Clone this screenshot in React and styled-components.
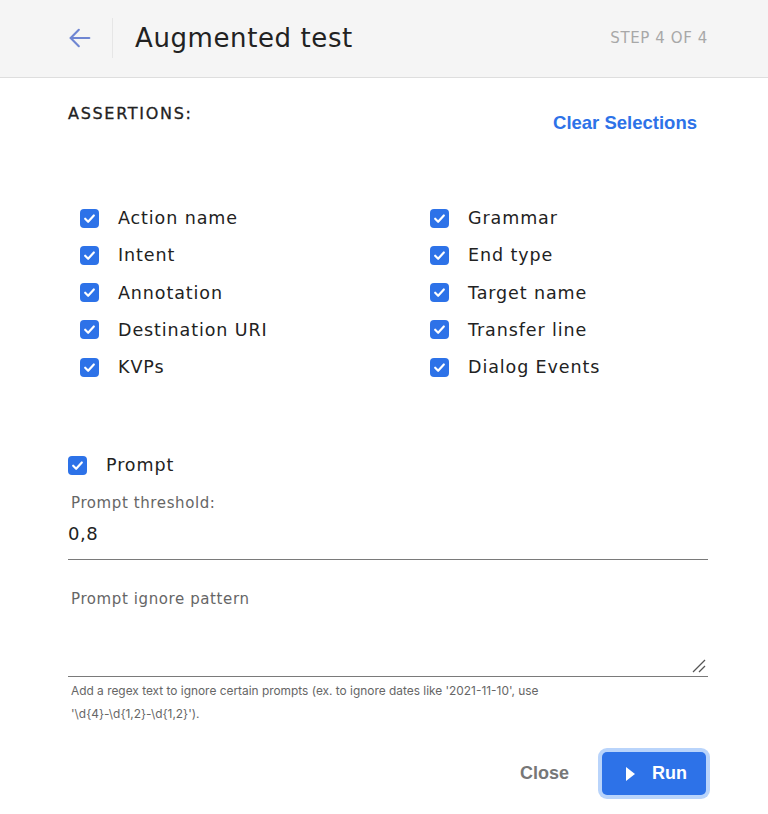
import styled, { createGlobalStyle } from "styled-components";

const GlobalStyle = createGlobalStyle`
  html, body {
    margin: 0;
    padding: 0;
    background: #fff;
  }
  body {
    font-family: "DejaVu Sans", "Noto Sans", sans-serif;
    color: #222;
  }
`;

const Container = styled.div`
  width: 768px;
  height: 814px;
  display: flex;
  flex-direction: column;
  overflow: hidden;
`;

const Header = styled.div`
  height: 78px;
  background: #f5f5f5;
  border-bottom: 1px solid #dedede;
  display: flex;
  align-items: center;
  padding: 0 60px 2px 66px;
  box-sizing: border-box;
`;

const BackButton = styled.div`
  width: 30px;
  height: 40px;
  display: flex;
  align-items: center;
  padding-right: 16px;
  border-right: 1px solid #e6e6e6;
  margin-right: 22px;
`;

const Title = styled.h1`
  margin: 0;
  font-size: 26px;
  font-weight: 400;
  letter-spacing: 0.6px;
  color: #222;
  flex: 1;
`;

const Step = styled.span`
  font-size: 15px;
  letter-spacing: 0.6px;
  color: #a8a8a8;
`;

const Body = styled.div`
  padding: 0 60px 0 68px;
  display: flex;
  flex-direction: column;
`;

const Top = styled.div`
  display: flex;
  justify-content: space-between;
  align-items: flex-start;
  padding-top: 26px;
`;

const SectionTitle = styled.div`
  font-size: 16px;
  line-height: 19px;
  letter-spacing: 1.7px;
  -webkit-text-stroke: 0.3px #222;
  color: #222;
`;

const ClearLink = styled.span`
  font-family: "Liberation Sans", Arial, sans-serif;
  font-weight: 700;
  font-size: 18.5px;
  line-height: 21px;
  color: #2d72e8;
  margin-top: 8px;
  margin-right: 11px;
`;

const Grid = styled.div`
  display: grid;
  grid-template-columns: 350px 1fr;
  row-gap: 15.25px;
  padding: 74px 0 0 12px;
`;

const Row = styled.label`
  display: flex;
  align-items: center;
  gap: 19px;
  font-size: 17.5px;
  letter-spacing: 0.9px;
  color: #222;
  height: 22px;
`;

const Box = styled.span`
  width: 19px;
  height: 19px;
  border-radius: 4px;
  background: #2d72e8;
  display: flex;
  align-items: center;
  justify-content: center;
  flex-shrink: 0;
`;

const PromptRow = styled(Row)`
  margin-top: 76px;
`;

const FieldLabel = styled.div`
  font-size: 15px;
  line-height: 17px;
  letter-spacing: 0.6px;
  color: #666;
  padding-left: 3px;
  margin-top: ${(p) => p.top || 0}px;
`;

const InputLine = styled.div`
  font-size: 18px;
  line-height: 20px;
  letter-spacing: 0.5px;
  color: #222;
  padding: 12px 0 15px;
  border-bottom: 1px solid #7a7a7a;
`;

const TextArea = styled.div`
  height: 68px;
  border-bottom: 1px solid #7a7a7a;
  position: relative;
`;

const Grip = styled.svg`
  position: absolute;
  right: 2px;
  bottom: 3px;
`;

const Help = styled.div`
  font-family: "Inter", "Noto Sans", sans-serif;
  font-size: 11.9px;
  line-height: 23px;
  color: #666;
  padding: 2px 0 0 3px;
`;

const Actions = styled.div`
  display: flex;
  justify-content: flex-end;
  align-items: center;
  gap: 33px;
  margin-top: 27px;
`;

const CloseButton = styled.span`
  font-family: "Liberation Sans", Arial, sans-serif;
  font-weight: 700;
  font-size: 18px;
  color: #777;
`;

const RunButton = styled.button`
  width: 104px;
  height: 43px;
  border: none;
  border-radius: 5px;
  background: #2d72e8;
  color: #fff;
  box-shadow: 0 0 0 4px #b9d4fb;
  display: flex;
  align-items: center;
  gap: 17px;
  padding: 0 0 0 24px;
  font-family: "Liberation Sans", Arial, sans-serif;
  font-weight: 700;
  font-size: 18px;
  margin-right: 2px;
`;

const Check = () => (
  <Box>
    <svg width="13" height="13" viewBox="0 0 24 24" fill="none" stroke="#fff" strokeWidth="4" strokeLinecap="round" strokeLinejoin="round">
      <polyline points="4 12.5 9.5 18 20 6.5" />
    </svg>
  </Box>
);

const items = [
  ["Action name", "Grammar"],
  ["Intent", "End type"],
  ["Annotation", "Target name"],
  ["Destination URI", "Transfer line"],
  ["KVPs", "Dialog Events"],
];

const App = () => {
  return (
    <Container>
      <GlobalStyle />
      <Header>
        <BackButton>
          <svg width="28" height="28" viewBox="0 0 24 24" fill="none" stroke="#6f86d2" strokeWidth="1.8" strokeLinecap="round" strokeLinejoin="round">
            <path d="M20 12H4" />
            <path d="M11 5l-7 7 7 7" />
          </svg>
        </BackButton>
        <Title>Augmented test</Title>
        <Step>STEP 4 OF 4</Step>
      </Header>
      <Body>
        <Top>
          <SectionTitle>ASSERTIONS:</SectionTitle>
          <ClearLink>Clear Selections</ClearLink>
        </Top>
        <Grid>
          {items.flat().map((name) => (
            <Row key={name}>
              <Check />
              {name}
            </Row>
          ))}
        </Grid>
        <PromptRow>
          <Check />
          Prompt
        </PromptRow>
        <FieldLabel top={19}>Prompt threshold:</FieldLabel>
        <InputLine>0,8</InputLine>
        <FieldLabel top={31}>Prompt ignore pattern</FieldLabel>
        <TextArea>
          <Grip width="14" height="14" viewBox="0 0 14 14" stroke="#555" strokeWidth="1.2">
            <line x1="13" y1="1" x2="1" y2="13" />
            <line x1="13" y1="7" x2="7" y2="13" />
          </Grip>
        </TextArea>
        <Help>
          Add a regex text to ignore certain prompts (ex. to ignore dates like '2021-11-10', use
          <br />
          '\d{"{4}"}-\d{"{1,2}"}-\d{"{1,2}"}').
        </Help>
        <Actions>
          <CloseButton>Close</CloseButton>
          <RunButton>
            <svg width="9" height="14" viewBox="0 0 9 14">
              <polygon points="0,0 9,7 0,14" fill="#fff" />
            </svg>
            Run
          </RunButton>
        </Actions>
      </Body>
    </Container>
  );
};

export default App;
